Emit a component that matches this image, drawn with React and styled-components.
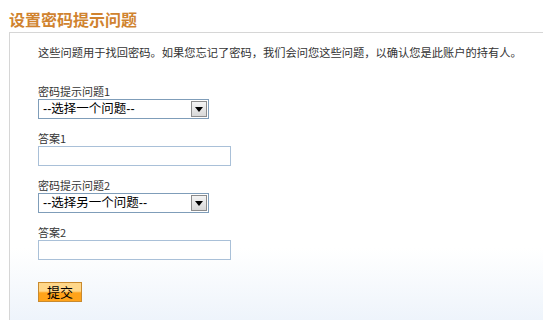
import React from "react";
import styled, { createGlobalStyle } from "styled-components";

const GlobalStyle = createGlobalStyle`
  body {
    margin: 0;
    background: #fff;
    font-family: "Noto Sans CJK SC", "Liberation Sans", sans-serif;
    color: #333;
  }
`;

const Page = styled.div`
  width: 543px;
  height: 320px;
  overflow: hidden;
  display: flex;
  flex-direction: column;
`;

const Title = styled.h2`
  margin: 0;
  padding: 9px 0 0 9px;
  height: 23px;
  font-size: 16px;
  line-height: 20px;
  font-weight: bold;
  color: #d0832f;
`;

const Panel = styled.div`
  flex: 1;
  margin-left: 9px;
  border-top: 1px solid #d6d6d6;
  border-left: 1px solid #d6d6d6;
  padding: 11px 0 0 28px;
  background: linear-gradient(to bottom, #fff 0, #fff 215px, #eef4fb 100%);
  font-size: 11px;
  line-height: 16px;
`;

const Intro = styled.p`
  margin: 0 0 23px;
  font-size: 11.25px;
  white-space: nowrap;
`;

const Field = styled.div`
  display: flex;
  flex-direction: column;
  align-items: flex-start;
  margin-bottom: ${(p) => p.gap || 11}px;
`;

const Label = styled.label`
  display: block;
`;

const SelectBox = styled.div`
  box-sizing: border-box;
  width: 171px;
  height: 20px;
  border: 1px solid #7f9db9;
  background: #fff;
  display: flex;
  align-items: center;
  padding: 0 1px 0 4px;
`;

const SelectValue = styled.span`
  flex: 1;
  font-family: "Liberation Sans", "Noto Sans CJK SC", sans-serif;
  font-size: 12.5px;
  color: #000;
  white-space: nowrap;
`;

const ArrowButton = styled.span`
  box-sizing: border-box;
  width: 16px;
  height: 16px;
  border: 1px solid #8c8c8c;
  background: linear-gradient(to bottom, #f4f4f4, #d8d8d8);
  display: flex;
  align-items: center;
  justify-content: center;
`;

const TextInput = styled.input`
  box-sizing: border-box;
  width: 193px;
  height: 20px;
  margin: 0;
  border: 1px solid #a9c0d8;
  background: #fff;
  outline: none;
`;

const SubmitButton = styled.button`
  box-sizing: border-box;
  width: 44px;
  height: 20px;
  margin: 0;
  padding: 0;
  border: 1px solid #c98a2e;
  background: linear-gradient(to bottom, #ffd78a 0, #ffd78a 45%, #ffa31a 55%, #ffa31a 100%);
  font-family: "Noto Sans CJK SC", sans-serif;
  font-size: 13px;
  line-height: 18px;
  color: #000;
`;

const Arrow = () => (
  <svg width="8" height="5" viewBox="0 0 8 5">
    <path d="M0 0h8L4 5z" fill="#000" />
  </svg>
);

const Select = ({ value }) => (
  <SelectBox>
    <SelectValue>{value}</SelectValue>
    <ArrowButton>
      <Arrow />
    </ArrowButton>
  </SelectBox>
);

export default function App() {
  return (
    <Page>
      <GlobalStyle />
      <Title>设置密码提示问题</Title>
      <Panel>
        <Intro>
          这些问题用于找回密码。如果您忘记了密码，我们会问您这些问题，以确认您是此账户的持有人。
        </Intro>
        <Field>
          <Label>密码提示问题1</Label>
          <Select value="--选择一个问题--" />
        </Field>
        <Field>
          <Label>答案1</Label>
          <TextInput type="text" />
        </Field>
        <Field gap={11}>
          <Label>密码提示问题2</Label>
          <Select value="--选择另一个问题--" />
        </Field>
        <Field gap={22}>
          <Label>答案2</Label>
          <TextInput type="text" />
        </Field>
        <SubmitButton>提交</SubmitButton>
      </Panel>
    </Page>
  );
}
